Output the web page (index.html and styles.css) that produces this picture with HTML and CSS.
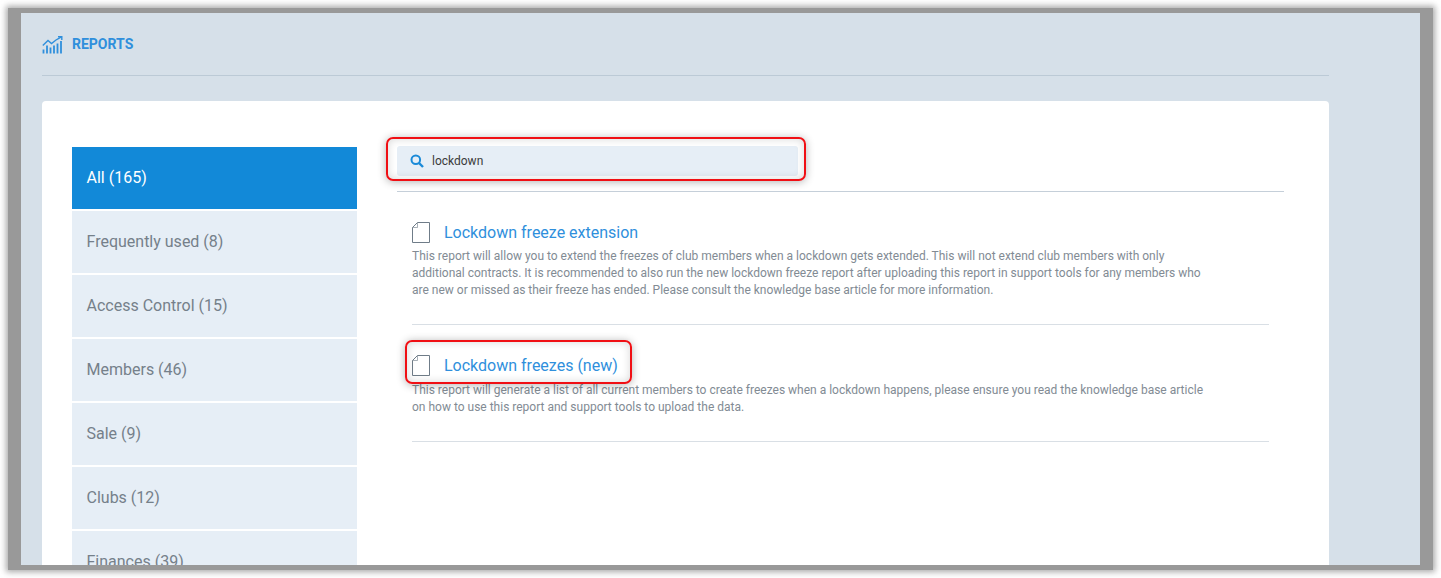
FILE: index.html
```html
<!DOCTYPE html>
<html lang="en">
<head>
<meta charset="utf-8">
<title>Reports</title>
<link rel="stylesheet" href="styles.css">
</head>
<body>
<div class="frame">
  <main class="page">
    <header class="page-head">
      <svg class="head-icon" width="21" height="18" viewBox="0 0 21 18" fill="none" stroke="#2f8fdc" stroke-width="1.4">
        <path d="M.8 9.500 6 4.500 9.500 7.500 14 4 19.500 .8"/>
        <path d="M16 .7h3.800v3.300"/>
        <path d="M1.500 17.500v-4M5 17.500v-8M8.500 17.500v-6M12 17.500v-8M15.500 17.500v-10M19 17.500V5" stroke-width="1.800"/>
      </svg>
      <h1 class="head-title">REPORTS</h1>
    </header>
    <section class="card">
      <nav class="side">
        <a class="side-item active">All (165)</a>
        <a class="side-item">Frequently used (8)</a>
        <a class="side-item">Access Control (15)</a>
        <a class="side-item">Members (46)</a>
        <a class="side-item">Sale (9)</a>
        <a class="side-item">Clubs (12)</a>
        <a class="side-item">Finances (39)</a>
      </nav>
      <div class="content">
        <div class="search-wrap">
          <div class="search">
            <svg class="search-icon" width="14" height="14" viewBox="0 0 14 14" fill="none" stroke="#1a8ad8">
              <circle cx="5.800" cy="5.800" r="4.300" stroke-width="2"/>
              <path d="M9 9l4 4" stroke-width="2.400"/>
            </svg>
            <span class="search-text">lockdown</span>
          </div>
          <span class="callout callout-search"></span>
        </div>
        <div class="results">
          <article class="result result-first">
            <div class="result-head">
              <svg class="doc" width="18" height="21" viewBox="0 0 18 21" fill="none" stroke="#6f7c88"><path d="M5.500 .5h12v20H.5V5.500z"/><path d="M5.500 .5v5h-5" stroke-width=".6"/></svg>
              <h2 class="result-title">Lockdown freeze extension</h2>
            </div>
            <p class="result-desc">This report will allow you to extend the freezes of club members when a lockdown gets extended. This will not extend club members with only additional contracts. It is recommended to also run the new lockdown freeze report after uploading this report in support tools for any members who are new or missed as their freeze has ended. Please consult the knowledge base article for more information.</p>
          </article>
          <article class="result result-second">
            <div class="result-head">
              <svg class="doc" width="18" height="21" viewBox="0 0 18 21" fill="none" stroke="#6f7c88"><path d="M5.500 .5h12v20H.5V5.500z"/><path d="M5.500 .5v5h-5" stroke-width=".6"/></svg>
              <h2 class="result-title">Lockdown freezes (new)</h2>
              <span class="callout callout-title"></span>
            </div>
            <p class="result-desc">This report will generate a list of all current members to create freezes when a lockdown happens, please ensure you read the knowledge base article on how to use this report and support tools to upload the data.</p>
          </article>
        </div>
      </div>
    </section>
  </main>
</div>
</body>
</html>
```

FILE: styles.css
```css
* { box-sizing: border-box; }
html, body { margin: 0; height: 578px; overflow: hidden; background: #fff; }
body { font-family: Roboto, "Liberation Sans", sans-serif; padding: 8px; }

.frame {
  height: 562px;
  width: 1425px;
  background: #999;
  padding: 5px 13px;
  box-shadow: 0 0 6px 2px rgba(110, 110, 110, .6);
}
.page {
  height: 552px;
  background: #d6e0e9;
  overflow: hidden;
  padding: 0 91px 0 21px;
}

.page-head {
  height: 63px;
  border-bottom: 1px solid #bccad6;
  display: flex;
  align-items: center;
  gap: 9px;
}
.head-icon { display: block; margin-top: 2px; }
.head-title { margin: 0; font-size: 14px; font-weight: 700; color: #2f8fdc; line-height: 1; }

.card {
  margin-top: 25px;
  background: #fff;
  border-radius: 4px;
  display: flex;
  padding: 46px 45px 0 30px;
  height: 600px;
}

.side { width: 285px; flex: none; display: flex; flex-direction: column; gap: 2px; }
.side-item {
  height: 62px;
  background: #e6eef6;
  color: #75808a;
  font-size: 16px;
  line-height: 62px;
  padding-left: 14.500px;
}
.side-item.active { background: #1289d8; color: #fff; }

.content { flex: 1; margin-left: 40px; }

.search-wrap {
  position: relative;
  border-bottom: 1px solid #c5cfd9;
  height: 45px;
  margin-bottom: 0;
}
.search {
  width: 401px;
  height: 30px;
  margin-top: -1px;
  background: #e6eef6;
  border-radius: 3px;
  display: flex;
  align-items: center;
  padding-left: 13px;
  gap: 8px;
}
.search-icon { display: block; }
.search-text { font-size: 12px; color: #3b3b3b; }

.callout {
  position: absolute;
  border: 2px solid #f00f14;
  border-radius: 7px;
  box-shadow: 0 1px 8px rgba(0, 0, 0, .3), inset 0 0 8px rgba(0, 0, 0, .16);
  pointer-events: none;
}
.callout-search { left: -11px; top: -9px; width: 420px; height: 44px; }
.callout-title { left: -7px; top: -15px; width: 227px; height: 44px; }

.results { padding: 0 15px; }
.search-wrap { height: 46px; }
.result { border-bottom: 1px solid #d9dfe5; }
.result-first { height: 133px; padding-top: 30px; }
.result-second { height: 117px; padding-top: 30px; }

.result-head { position: relative; display: flex; align-items: center; gap: 14px; height: 21px; }
.doc { display: block; flex: none; }
.result-title { margin: 0; font-size: 16px; font-weight: 400; color: #2f8fdc; line-height: 21px; }
.result-desc { margin: 5px 0 0; font-size: 12px; line-height: 17px; color: #828b94; width: 800px; }
.result-second .result-desc { margin-top: 6px; }
```
